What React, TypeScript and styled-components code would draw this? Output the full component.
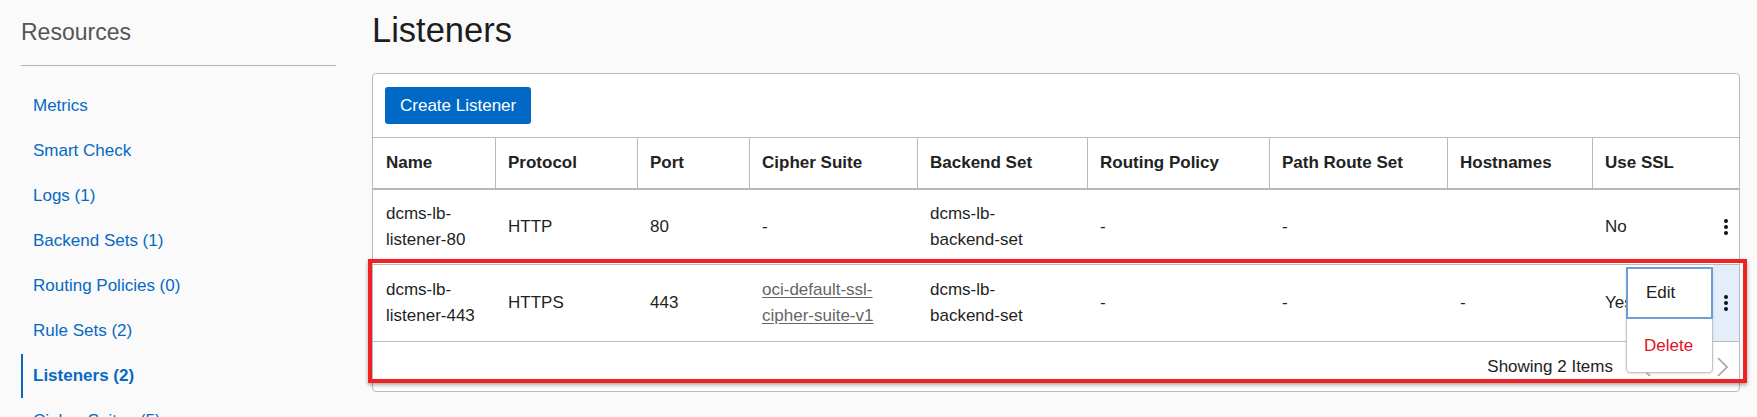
import * as React from "react";
import styled, { createGlobalStyle } from "styled-components";

const colors = {
  page: "#fafafa",
  text: "#1f1f1f",
  muted: "#555555",
  link: "#0769c4",
  primary: "#0068c5",
  border: "#b7bbc1",
  danger: "#e0101e",
  focus: "#6c9fd8",
  rowSelected: "#e3eefa",
  annotation: "#ee2222",
};

const fonts = {
  SANS: `"Liberation Sans", Arial, Helvetica, sans-serif`,
};

const GlobalStyle = createGlobalStyle`
  html, body {
    margin: 0;
    padding: 0;
    overflow: hidden;
    background: ${colors.page};
    font-family: ${fonts.SANS};
    color: ${colors.text};
  }
`;

const Page = styled.div`
  display: flex;
  align-items: flex-start;
  width: 1757px;
  height: 417px;
  overflow: hidden;
`;

const Sidebar = styled.aside`
  width: 315px;
  padding: 19px 0 0 21px;
`;

const SidebarTitle = styled.h2`
  margin: 0;
  font: 400 23px/26px ${fonts.SANS};
  color: ${colors.muted};
`;

const Divider = styled.hr`
  margin: 20px 0 0;
  border: 0;
  border-top: 1px solid #b3b3b3;
`;

const NavList = styled.ul`
  list-style: none;
  margin: 0;
  padding: 18px 0 0;
`;

const NavItem = styled.li<{ $active?: boolean }>`
  display: flex;
  align-items: center;
  height: 44px;
  margin-bottom: 1px;
  padding-left: 10px;
  border-left: 2px solid ${(p) => (p.$active ? colors.link : "transparent")};
  font: ${(p) => (p.$active ? 700 : 400)} 17px/20px ${fonts.SANS};
  color: ${colors.link};
`;

const Main = styled.main`
  margin-left: 36px;
  padding-top: 10px;
  width: 1368px;
`;

const PageTitle = styled.h1`
  margin: 0 0 23px;
  font: 400 34.5px/40px ${fonts.SANS};
  color: #1d1d1d;
`;

const Card = styled.div`
  position: relative;
  background: #fff;
  border: 1px solid ${colors.border};
  border-radius: 4px;
`;

const Toolbar = styled.div`
  display: flex;
  align-items: center;
  padding: 13px 12px 13px;
  border-bottom: 1px solid ${colors.border};
`;

const PrimaryButton = styled.button`
  height: 37px;
  padding: 0 15px;
  border: 0;
  border-radius: 3px;
  background: ${colors.primary};
  color: #fff;
  font: 400 17px/20px ${fonts.SANS};
  cursor: pointer;
`;

const COLUMNS = "122px 142px 112px 168px 170px 182px 178px 145px 121px 26px";

const HeaderRow = styled.div`
  display: grid;
  grid-template-columns: ${COLUMNS};
  height: 50px;
  border-bottom: 2px solid #b3b6bb;
`;

const HeaderCell = styled.div<{ $divider?: boolean }>`
  display: flex;
  align-items: center;
  padding-left: 12px;
  border-left: 1px solid ${(p) => (p.$divider ? colors.border : "transparent")};
  font: 700 17px/20px ${fonts.SANS};
  color: #222;
`;

const BodyRow = styled.div<{ $height: number }>`
  display: grid;
  grid-template-columns: ${COLUMNS};
  height: ${(p) => p.$height}px;
  border-bottom: 1px solid ${colors.border};
`;

const Cell = styled.div`
  display: flex;
  align-items: center;
  padding-left: 13px;
  font: 400 17px/26px ${fonts.SANS};
  color: ${colors.text};
  white-space: pre-line;
`;

const LinkText = styled.a`
  color: #666;
  text-decoration: underline;
  text-underline-offset: 2px;
`;

const ActionCell = styled.div<{ $selected?: boolean }>`
  display: flex;
  align-items: center;
  justify-content: center;
  background: ${(p) => (p.$selected ? colors.rowSelected : "transparent")};
`;

const Kebab = styled.span`
  display: flex;
  flex-direction: column;
  gap: 2px;

  & i {
    display: block;
    width: 4px;
    height: 4px;
    border-radius: 50%;
    background: #111;
  }
`;

const Footer = styled.div`
  display: flex;
  align-items: center;
  justify-content: flex-end;
  height: 49px;
  padding-right: 11px;
  font: 400 17px/20px ${fonts.SANS};
  color: #222;
`;

const Pager = styled.div`
  display: flex;
  align-items: center;
  gap: 66px;
  margin-left: 27px;
`;

const Menu = styled.ul`
  position: absolute;
  left: 1253px;
  top: 193px;
  width: 87px;
  height: 106px;
  margin: 0;
  padding: 0;
  list-style: none;
  box-sizing: border-box;
  background: #fff;
  border: 1px solid #c3c3c3;
  border-radius: 4px;
  box-shadow: 0 1px 3px rgba(0, 0, 0, 0.12);
  z-index: 2;
`;

const MenuItem = styled.li<{ $focused?: boolean; $danger?: boolean }>`
  display: flex;
  align-items: center;
  box-sizing: border-box;
  height: ${(p) => (p.$focused ? 52 : 53)}px;
  margin: ${(p) => (p.$focused ? "-1px -1px 0" : "0")};
  padding-left: ${(p) => (p.$focused ? 18 : 17)}px;
  border: ${(p) => (p.$focused ? `2px solid ${colors.focus}` : "0")};
  font: 400 17px/20px ${fonts.SANS};
  color: ${(p) => (p.$danger ? colors.danger : "#222")};
`;

const Annotation = styled.div`
  position: absolute;
  left: -5px;
  top: 185px;
  width: 1379px;
  height: 124px;
  box-sizing: border-box;
  border: 4px solid ${colors.annotation};
  box-shadow: 0 2px 4px rgba(0, 0, 0, 0.35);
  pointer-events: none;
  z-index: 3;
`;

const Chevron = ({ dir }: { dir: "left" | "right" }) => (
  <svg width="11" height="20" viewBox="0 0 11 20" fill="none">
    <path
      d={dir === "right" ? "M1 1 L10 10 L1 19" : "M10 1 L1 10 L10 19"}
      stroke="#a5a5a5"
      strokeWidth="1.6"
    />
  </svg>
);

const KebabIcon = () => (
  <Kebab>
    <i />
    <i />
    <i />
  </Kebab>
);

const navItems = [
  "Metrics",
  "Smart Check",
  "Logs (1)",
  "Backend Sets (1)",
  "Routing Policies (0)",
  "Rule Sets (2)",
  "Listeners (2)",
  "Cipher Suites (5)",
  "Certificates (1)",
];

const headers = [
  "Name",
  "Protocol",
  "Port",
  "Cipher Suite",
  "Backend Set",
  "Routing Policy",
  "Path Route Set",
  "Hostnames",
  "Use SSL",
  "",
];

interface Listener {
  name: string;
  protocol: string;
  port: string;
  cipher?: string;
  backendSet: string;
  routingPolicy: string;
  pathRouteSet: string;
  hostnames: string;
  useSsl: string;
  height: number;
  selected?: boolean;
}

const listeners: Listener[] = [
  {
    name: "dcms-lb-\nlistener-80",
    protocol: "HTTP",
    port: "80",
    backendSet: "dcms-lb-\nbackend-set",
    routingPolicy: "-",
    pathRouteSet: "-",
    hostnames: "",
    useSsl: "No",
    height: 74,
  },
  {
    name: "dcms-lb-\nlistener-443",
    protocol: "HTTPS",
    port: "443",
    cipher: "oci-default-ssl-\ncipher-suite-v1",
    backendSet: "dcms-lb-\nbackend-set",
    routingPolicy: "-",
    pathRouteSet: "-",
    hostnames: "-",
    useSsl: "Yes",
    height: 76,
    selected: true,
  },
];

export default function App(): JSX.Element {
  return (
    <>
      <GlobalStyle />
      <Page>
        <Sidebar>
          <SidebarTitle>Resources</SidebarTitle>
          <Divider />
          <NavList>
            {navItems.map((item) => (
              <NavItem key={item} $active={item === "Listeners (2)"}>
                {item}
              </NavItem>
            ))}
          </NavList>
        </Sidebar>

        <Main>
          <PageTitle>Listeners</PageTitle>
          <Card>
            <Toolbar>
              <PrimaryButton>Create Listener</PrimaryButton>
            </Toolbar>

            <HeaderRow>
              {headers.map((h, i) => (
                <HeaderCell key={i} $divider={i > 0 && i < 9}>
                  {h}
                </HeaderCell>
              ))}
            </HeaderRow>

            {listeners.map((l) => (
              <BodyRow key={l.name} $height={l.height}>
                <Cell>{l.name}</Cell>
                <Cell>{l.protocol}</Cell>
                <Cell>{l.port}</Cell>
                <Cell>{l.cipher ? <LinkText>{l.cipher}</LinkText> : "-"}</Cell>
                <Cell>{l.backendSet}</Cell>
                <Cell>{l.routingPolicy}</Cell>
                <Cell>{l.pathRouteSet}</Cell>
                <Cell>{l.hostnames}</Cell>
                <Cell>{l.useSsl}</Cell>
                <ActionCell $selected={l.selected}>
                  <KebabIcon />
                </ActionCell>
              </BodyRow>
            ))}

            <Footer>
              Showing 2 Items
              <Pager>
                <Chevron dir="left" />
                <Chevron dir="right" />
              </Pager>
            </Footer>

            <Menu>
              <MenuItem $focused>Edit</MenuItem>
              <MenuItem $danger>Delete</MenuItem>
            </Menu>

            <Annotation />
          </Card>
        </Main>
      </Page>
    </>
  );
}
